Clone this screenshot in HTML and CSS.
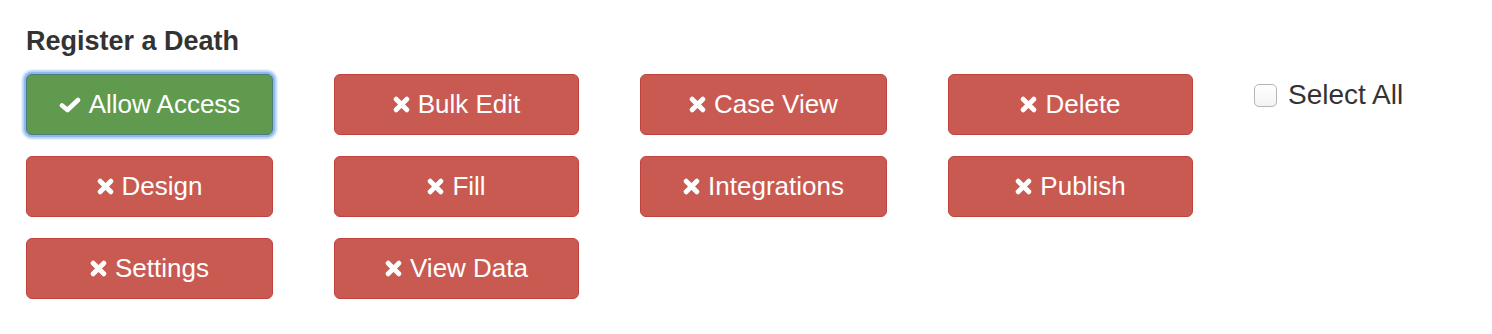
FILE: index.html
```html
<!DOCTYPE html>
<html>
<head>
<meta charset="utf-8">
<link rel="stylesheet" href="styles.css">
</head>
<body>
<div class="panel">
  <h3 class="title">Register a Death</h3>
  <div class="grid">
    <button class="btn btn-on"><svg class="ic-check" viewBox="0 0 22 16"><polyline points="3,8.5 8.5,13 19,3"/></svg>Allow Access</button>
    <button class="btn btn-off"><svg class="ic-x" viewBox="0 0 16 16"><path d="M3 3L13 13M13 3L3 13"/></svg>Bulk Edit</button>
    <button class="btn btn-off"><svg class="ic-x" viewBox="0 0 16 16"><path d="M3 3L13 13M13 3L3 13"/></svg>Case View</button>
    <button class="btn btn-off"><svg class="ic-x" viewBox="0 0 16 16"><path d="M3 3L13 13M13 3L3 13"/></svg>Delete</button>
    <label class="select-all"><input type="checkbox" class="chk"><span>Select All</span></label>
    <button class="btn btn-off"><svg class="ic-x" viewBox="0 0 16 16"><path d="M3 3L13 13M13 3L3 13"/></svg>Design</button>
    <button class="btn btn-off"><svg class="ic-x" viewBox="0 0 16 16"><path d="M3 3L13 13M13 3L3 13"/></svg>Fill</button>
    <button class="btn btn-off"><svg class="ic-x" viewBox="0 0 16 16"><path d="M3 3L13 13M13 3L3 13"/></svg>Integrations</button>
    <button class="btn btn-off"><svg class="ic-x" viewBox="0 0 16 16"><path d="M3 3L13 13M13 3L3 13"/></svg>Publish</button>
    <div class="spacer"></div>
    <button class="btn btn-off"><svg class="ic-x" viewBox="0 0 16 16"><path d="M3 3L13 13M13 3L3 13"/></svg>Settings</button>
    <button class="btn btn-off"><svg class="ic-x" viewBox="0 0 16 16"><path d="M3 3L13 13M13 3L3 13"/></svg>View Data</button>
  </div>
</div>
</body>
</html>
```
FILE: styles.css
```css
html, body {
  margin: 0;
  padding: 0;
  background: #ffffff;
}
body {
  font-family: "Liberation Sans", Arial, sans-serif;
  color: #333333;
}
.panel {
  padding: 26px 0 0 26px;
}
.title {
  margin: 0 0 17px 0;
  font-size: 27px;
  line-height: 31px;
  font-weight: bold;
  color: #333333;
}
.grid {
  display: grid;
  grid-template-columns: 308px 306px 308px 306px 240px;
  grid-auto-rows: 61px;
  row-gap: 21px;
  align-items: start;
}
.btn {
  width: calc(100% - 61px);
  height: 61px;
  box-sizing: border-box;
  display: flex;
  align-items: center;
  justify-content: center;
  gap: 8px;
  border-radius: 6px;
  border: 1px solid;
  font-family: "Liberation Sans", Arial, sans-serif;
  font-size: 26px;
  color: #ffffff;
  padding: 0;
  margin: 0;
  cursor: pointer;
}
.btn-off {
  background: #c95a52;
  border-color: #c0443d;
}
.btn-on {
  background: #5f9a4e;
  border-color: #4b7d76;
  box-shadow: 0 0 0 2px #8fb8ee, 0 0 2px 4px rgba(160, 196, 243, 0.75);
}
.ic-x {
  width: 17px;
  height: 17px;
  flex: none;
}
.ic-x path {
  fill: none;
  stroke: #ffffff;
  stroke-width: 4.6;
  stroke-linecap: round;
}
.ic-check {
  width: 22px;
  height: 16px;
  flex: none;
}
.ic-check polyline {
  fill: none;
  stroke: #ffffff;
  stroke-width: 4.6;
  stroke-linecap: round;
  stroke-linejoin: round;
}
.select-all {
  display: flex;
  align-items: center;
  gap: 11px;
  height: 42px;
  font-size: 28px;
  color: #333333;
}
.chk {
  appearance: none;
  -webkit-appearance: none;
  width: 23px;
  height: 23px;
  margin: 0;
  border: 1px solid #b5b5b5;
  border-radius: 5px;
  background: linear-gradient(#ffffff, #f3f3f3);
  box-sizing: border-box;
}
.spacer {
  height: 61px;
}
```
